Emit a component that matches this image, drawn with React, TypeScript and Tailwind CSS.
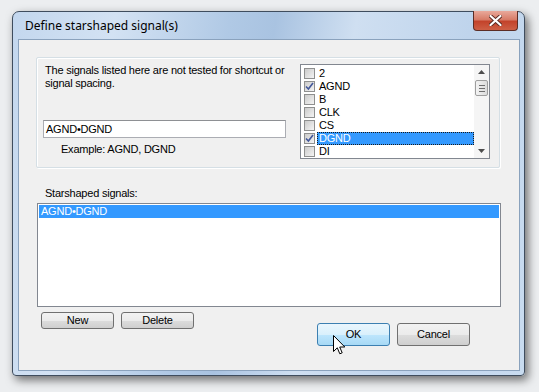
const signals = [
  { name: "2", checked: false },
  { name: "AGND", checked: true },
  { name: "B", checked: false },
  { name: "CLK", checked: false },
  { name: "CS", checked: false },
  { name: "DGND", checked: true, selected: true },
  { name: "DI", checked: false },
];

function CheckBox({ checked }: { checked: boolean }) {
  return (
    <span className="relative flex h-[11px] w-[11px] shrink-0 items-center justify-center border border-[#8e8f8f] bg-gradient-to-br from-[#cbcbcb] to-[#f4f4f4]">
      {checked && (
        <svg width="9" height="9" viewBox="0 0 9 9" className="absolute left-[0px] top-[0px]" aria-hidden="true">
          <path d="M1 4.5 L3.4 7 L8 1" stroke="#42579a" strokeWidth="1.6" fill="none" />
        </svg>
      )}
    </span>
  );
}

function WinButton({ label, hot, className }: { label: string; hot?: boolean; className?: string }) {
  return (
    <button
      className={
        "flex w-[73px] items-center justify-center rounded-[3px] border text-[11px] text-black " +
        (hot
          ? "border-[#3c7fb1] bg-[linear-gradient(#eaf6fd_0%,#d9f0fc_50%,#bee6fd_50%,#a7d9f5_100%)] "
          : "border-[#707070] bg-[linear-gradient(#f2f2f2_0%,#ebebeb_50%,#dddddd_50%,#cfcfcf_100%)] ") +
        (className ?? "")
      }
    >
      {label}
    </button>
  );
}

function ScrollArrow({ up }: { up: boolean }) {
  return (
    <div className="flex h-[14px] items-center justify-center">
      <svg width="7" height="4" viewBox="0 0 7 4" aria-hidden="true">
        <path d={up ? "M0 4 L3.5 0 L7 4 Z" : "M0 0 L3.5 4 L7 0 Z"} fill="#4d4d4d" />
      </svg>
    </div>
  );
}

export default function App() {
  return (
    <div className="relative h-[392px] w-[539px] overflow-hidden bg-[#eceef0] pl-[12px] pt-[11px] font-['Liberation_Sans',Arial,sans-serif]">
      <div className="relative flex h-[365px] w-[513px] flex-col rounded-t-[7px] rounded-b-[4px] border border-[#3f4d5e] bg-[linear-gradient(100deg,#c3d7ee_0%,#d3e2f3_18%,#b0c9e5_38%,#a9c3e1_46%,#cfdff1_60%,#bfd4ec_80%,#c9dcf0_100%)] pb-[4px] pl-[5px] pr-[4px] shadow-[3px_4px_10px_rgba(0,0,0,0.55)]">
        {/* title bar */}
        <div className="flex h-[27px] items-center pl-[7px] pt-[1px] font-['Noto_Sans',sans-serif] text-[12px] text-black">
          Define starshaped signal(s)
        </div>
        <div className="absolute right-[6px] top-[-1px] flex h-[20px] w-[45px] items-center justify-center rounded-b-[4px] border border-t-0 border-[#5c2d25] bg-[linear-gradient(#e9a99b_0%,#d77c68_45%,#c3432b_55%,#cd5f45_100%)]">
          <svg width="13" height="11" viewBox="0 0 13 11" aria-hidden="true">
            <path d="M1.5 1 L11.5 10 M11.5 1 L1.5 10" stroke="#5a2a22" strokeWidth="4" strokeLinecap="round" />
            <path d="M1.5 1 L11.5 10 M11.5 1 L1.5 10" stroke="#ffffff" strokeWidth="2.2" strokeLinecap="round" />
          </svg>
        </div>

        {/* client area */}
        <div className="relative flex flex-1 flex-col border border-[#8aa2bd] bg-[#f0f0f0] text-[11px] tracking-[-0.22px] text-black">
          {/* group box */}
          <div className="ml-[17px] mt-[17px] flex h-[111px] w-[464px] rounded-[2px] border border-[#d5dfe5] pl-[8px] pt-[6px] shadow-[inset_1px_1px_0_#ffffff,1px_1px_0_#ffffff]">
            <div className="flex w-[255px] flex-col">
              <p className="leading-[13px]">
                The signals listed here are not tested for shortcut or
                <br />
                signal spacing.
              </p>
              <div className="-ml-[2px] mt-[30px] flex h-[18px] w-[243px] items-center border border-[#abadb3] border-t-[#8e9094] bg-white pl-[2px]">
                AGND•DGND
              </div>
              <div className="ml-[16px] mt-[5px] leading-[13px]">Example: AGND, DGND</div>
            </div>
            <div className="flex h-[95px] w-[190px] border border-[#828790] bg-white">
              <div className="flex flex-1 flex-col pl-[3px] pt-[2px]">
                {signals.map((s) => (
                  <div key={s.name} className="flex h-[13px] items-center gap-[2px]">
                    <CheckBox checked={s.checked} />
                    <span
                      className={
                        s.selected
                          ? "flex h-[13px] flex-1 items-center border border-dotted border-[#1b1b1b] bg-[#3399ff] pl-[1px] text-white"
                          : "pl-[2px]"
                      }
                    >
                      {s.name}
                    </span>
                  </div>
                ))}
              </div>
              <div className="flex w-[15px] flex-col bg-[#f5f5f5]">
                <ScrollArrow up />
                <div className="mx-[1px] mt-[1px] flex h-[16px] flex-col items-center justify-center gap-[2px] rounded-[2px] border border-[#9e9e9e] bg-[linear-gradient(90deg,#f3f3f3,#dcdcdc)]">
                  <span className="h-px w-[6px] bg-[#6e6e6e]" />
                  <span className="h-px w-[6px] bg-[#6e6e6e]" />
                  <span className="h-px w-[6px] bg-[#6e6e6e]" />
                </div>
                <div className="flex-1" />
                <ScrollArrow up={false} />
              </div>
            </div>
          </div>

          {/* starshaped list */}
          <div className="ml-[26px] mt-[19px] leading-[13px]">Starshaped signals:</div>
          <div className="ml-[18px] mt-[3px] h-[104px] w-[464px] border border-[#828790] bg-white p-[1px]">
            <div className="flex h-[13px] items-center bg-[#3399ff] pl-[2px] text-white">AGND•DGND</div>
          </div>

          {/* buttons */}
          <div className="flex items-start pl-[22px] pt-[5px]">
            <WinButton label="New" className="h-[17px]" />
            <WinButton label="Delete" className="ml-[7px] h-[17px]" />
            <WinButton label="OK" hot className="ml-[123px] mt-[11px] h-[23px]" />
            <WinButton label="Cancel" className="ml-[7px] mt-[11px] h-[23px]" />
          </div>

          {/* mouse cursor */}
          <svg
            className="absolute left-[314px] top-[295px]"
            width="13"
            height="21"
            viewBox="0 0 13 21"
            aria-hidden="true"
          >
            <path
              d="M0.5 0.5 L0.5 16.5 L4.3 12.8 L6.8 18.8 L9.2 17.8 L6.7 12 L11.8 12 Z"
              fill="#ffffff"
              stroke="#000000"
              strokeWidth="1"
              strokeLinejoin="miter"
            />
          </svg>
        </div>
      </div>
    </div>
  );
}
